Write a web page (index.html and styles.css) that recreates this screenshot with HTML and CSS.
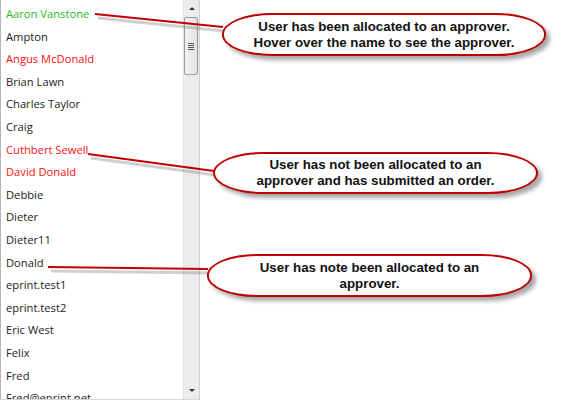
FILE: index.html
```html
<!DOCTYPE html>
<html>
<head>
<meta charset="utf-8">
<link rel="stylesheet" href="styles.css">
</head>
<body>
<div class="stage">
  <div class="panel">
    <ul class="names">
      <li class="ok">Aaron Vanstone</li>
      <li>Ampton</li>
      <li class="bad">Angus McDonald</li>
      <li>Brian Lawn</li>
      <li>Charles Taylor</li>
      <li>Craig</li>
      <li class="bad">Cuthbert Sewell</li>
      <li class="bad">David Donald</li>
      <li>Debbie</li>
      <li>Dieter</li>
      <li>Dieter11</li>
      <li>Donald</li>
      <li>eprint.test1</li>
      <li>eprint.test2</li>
      <li>Eric West</li>
      <li>Felix</li>
      <li>Fred</li>
      <li>Fred@eprint.net</li>
    </ul>
    <div class="scrollbar">
      <div class="arrow up"></div>
      <div class="thumb"><span class="grip"></span></div>
      <div class="track"></div>
      <div class="arrow down"></div>
    </div>
  </div>

  <svg class="lines" width="563" height="400" viewBox="0 0 563 400">
    <g stroke="#8a8a8a" stroke-width="3" opacity="0.4" fill="none">
      <line x1="98" y1="18" x2="224" y2="31"/>
      <line x1="91" y1="158" x2="215" y2="175"/>
      <line x1="51" y1="271" x2="209" y2="273"/>
    </g>
    <g stroke="#c00000" stroke-width="2.2" fill="none">
      <line x1="95" y1="14" x2="223" y2="27"/>
      <line x1="88" y1="154" x2="214" y2="171"/>
      <line x1="48" y1="267" x2="208" y2="269"/>
    </g>
  </svg>

  <div class="callout c1">User has been allocated to an approver.<br>Hover over the name to see the approver.</div>
  <div class="callout c2">User has not been allocated to an<br>approver and has submitted an order.</div>
  <div class="callout c3">User has note been allocated to an<br>approver.</div>
</div>
</body>
</html>
```
FILE: styles.css
```css
* { box-sizing: border-box; }
html, body { margin: 0; padding: 0; background: #fff; }
body { width: 563px; height: 400px; overflow: hidden; }

.stage { position: relative; width: 563px; height: 400px; }

.panel {
  display: flex;
  width: 200px;
  height: 400px;
  border-left: 1px solid #b5b5b5;
  border-right: 1px solid #d0d0d0;
  border-bottom: 1px solid #d8d8d8;
  overflow: hidden;
  background: #fff;
}

.names {
  list-style: none;
  margin: 0;
  padding: 3px 0 0 5px;
  flex: 1;
  font-family: "Open Sans", "Noto Sans", sans-serif;
  font-size: 11.2px;
  color: #222;
}
.names li { height: 22.6px; line-height: 22.6px; white-space: nowrap; }
.names li.ok { color: #1fb81f; }
.names li.bad { color: #ff1010; }

.scrollbar {
  width: 16px;
  display: flex;
  flex-direction: column;
  background: #ececec;
  border-left: 1px solid #e2e2e2;
}
.arrow { height: 17px; display: flex; align-items: center; justify-content: center; }
.arrow.up::before {
  content: ""; border-left: 3px solid transparent; border-right: 3px solid transparent;
  border-bottom: 3px solid #333;
}
.arrow.down::before {
  content: ""; border-left: 3px solid transparent; border-right: 3px solid transparent;
  border-top: 3px solid #333;
}
.thumb {
  height: 58px;
  margin: 0 1px 0 0;
  border: 1px solid #9a9a9a;
  border-radius: 2px;
  background: linear-gradient(to right, #f4f4f4, #e2e2e2);
  display: flex; align-items: center; justify-content: center;
}
.grip {
  width: 6px; height: 7px;
  background: repeating-linear-gradient(to bottom, #555 0 1px, transparent 1px 2px);
}
.track { flex: 1; }

.lines { position: absolute; left: 0; top: 0; pointer-events: none; }

.callout {
  position: absolute;
  display: flex;
  align-items: center;
  justify-content: center;
  text-align: center;
  background: #fff;
  border: 2px solid #c00000;
  border-radius: 50px / 21px;
  box-shadow: 4px 4px 4px rgba(0,0,0,0.35);
  font-family: "Liberation Sans", Arial, sans-serif;
  font-weight: bold;
  font-size: 13.3px;
  line-height: 16px;
  color: #111;
}
.c1 { left: 222px; top: 13px; width: 324px; height: 43px; }
.c2 { left: 213px; top: 152px; width: 325px; height: 42px; }
.c3 { left: 207px; top: 254px; width: 325px; height: 43px; }
```
